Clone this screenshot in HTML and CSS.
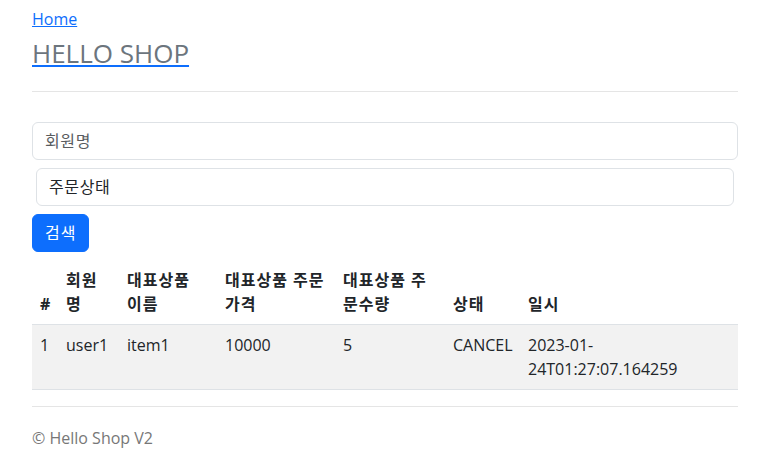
FILE: index.html
```html
<!DOCTYPE html>
<html lang="ko">
<head>
<meta charset="utf-8">
<title>HELLO SHOP</title>
<link rel="stylesheet" href="styles.css">
</head>
<body>
<div class="container">
  <div class="header">
    <a class="home-link" href="#">Home</a>
    <a class="brand-link" href="#"><h3 class="brand">HELLO SHOP</h3></a>
  </div>

  <form class="search-form">
    <div class="form-group">
      <input type="text" class="form-control" placeholder="회원명">
    </div>
    <div class="form-group form-group-inset">
      <select class="form-control">
        <option value="">주문상태</option>
        <option value="ORDER">ORDER</option>
        <option value="CANCEL">CANCEL</option>
      </select>
    </div>
    <button type="submit" class="btn-primary">검색</button>
  </form>

  <table class="orders">
    <thead>
      <tr>
        <th class="c-num">#</th>
        <th class="c-name">회원명</th>
        <th class="c-item">대표상품 이름</th>
        <th class="c-price">대표상품 주문가격</th>
        <th class="c-qty">대표상품 주문수량</th>
        <th class="c-status">상태</th>
        <th class="c-date">일시</th>
      </tr>
    </thead>
    <tbody>
      <tr>
        <td>1</td>
        <td>user1</td>
        <td>item1</td>
        <td>10000</td>
        <td>5</td>
        <td>CANCEL</td>
        <td>2023-01-24T01:27:07.164259</td>
      </tr>
    </tbody>
  </table>

  <div class="footer">
    <p>&copy; Hello Shop V2</p>
  </div>
</div>
</body>
</html>
```

FILE: styles.css
```css
* { box-sizing: border-box; }

body {
  margin: 0;
  font-family: "Open Sans", "Noto Sans CJK KR", sans-serif;
  font-size: 16px;
  line-height: 1.5;
  color: #212529;
  background: #fff;
}

.container {
  padding: 7px 21px 20px 32px;
}

a { color: #0d6efd; }

.header {
  border-bottom: 1px solid #e5e5e5;
  padding-bottom: 22px;
}

.home-link {
  display: inline-block;
  line-height: 24px;
}

.brand-link {
  display: block;
  width: max-content;
  margin-top: 7px;
}

.brand {
  margin: 0;
  font-size: 26px;
  font-weight: 400;
  line-height: 1.2;
  color: #6c757d;
}

.search-form {
  margin-top: 30px;
}

.form-group {
  margin-bottom: 8px;
}

.form-group-inset {
  margin-left: 4px;
  margin-right: 4px;
}

.form-control {
  display: block;
  width: 100%;
  height: 38px;
  padding: 6px 12px;
  font-family: inherit;
  font-size: 16px;
  line-height: 24px;
  letter-spacing: 0.6px;
  color: #212529;
  background: #fff;
  border: 1px solid #dee2e6;
  border-radius: 6px;
  appearance: none;
  -webkit-appearance: none;
}

.form-control::placeholder {
  color: #595c5f;
}

.btn-primary {
  display: inline-block;
  height: 38px;
  padding: 6px 12px;
  font-family: inherit;
  font-size: 16px;
  line-height: 24px;
  letter-spacing: 1px;
  color: #fff;
  background: #0d6efd;
  border: 1px solid #0d6efd;
  border-radius: 6px;
  margin-bottom: 8px;
  vertical-align: top;
}

.orders {
  width: 100%;
  border-collapse: collapse;
  table-layout: fixed;
  margin-bottom: 16px;
  vertical-align: top;
}

.orders th,
.orders td {
  padding: 8px;
  text-align: left;
  border-bottom: 1px solid #dee2e6;
}

.orders th {
  font-weight: 700;
  letter-spacing: 1px;
  vertical-align: bottom;
}

.orders td {
  vertical-align: top;
  background: #f2f2f2;
}

.c-num { width: 26px; }
.c-name { width: 61px; }
.c-item { width: 98px; }
.c-price { width: 118px; }
.c-qty { width: 110px; }
.c-status { width: 75px; }

.footer {
  padding-top: 19px;
  color: #777;
  border-top: 1px solid #e5e5e5;
}

.footer p {
  margin: 0;
}
```
